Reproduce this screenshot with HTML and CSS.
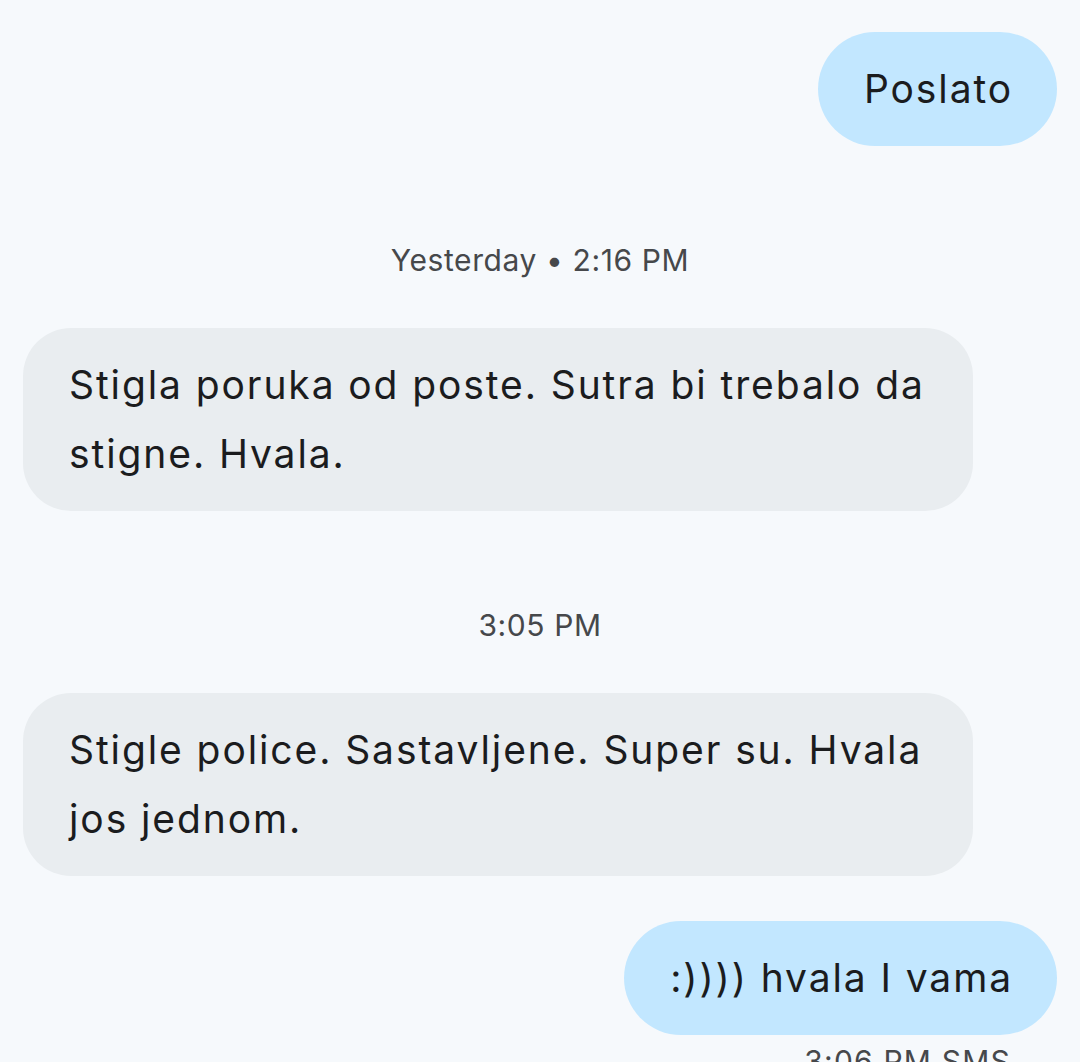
FILE: index.html
```html
<!DOCTYPE html>
<html lang="sr">
<head>
<meta charset="utf-8">
<link rel="stylesheet" href="styles.css">
</head>
<body>
<main class="thread">
  <div class="row out">
    <div class="bubble sent">Poslato</div>
  </div>
  <div class="stamp">Yesterday • 2:16 PM</div>
  <div class="row in">
    <div class="bubble recv">Stigla poruka od poste. Sutra bi trebalo da stigne. Hvala.</div>
  </div>
  <div class="stamp">3:05 PM</div>
  <div class="row in">
    <div class="bubble recv">Stigle police. Sastavljene. Super su. Hvala jos jednom.</div>
  </div>
  <div class="row out gap-small">
    <div class="bubble sent">:)))) hvala I vama</div>
  </div>
  <div class="status">3:06 PM SMS</div>
</main>
</body>
</html>
```

FILE: styles.css
```css
html, body {
  margin: 0;
  padding: 0;
  background: #f6f9fc;
  height: 100%;
  overflow: hidden;
}

.thread {
  display: flex;
  flex-direction: column;
  padding: 32px 23px 0 23px;
  font-family: Inter, Roboto, "Noto Sans", sans-serif;
  color: #1b1c1e;
}

.row {
  display: flex;
}

.row.out {
  justify-content: flex-end;
}

.row.in {
  justify-content: flex-start;
}

.gap-small {
  margin-top: 45px;
}

.bubble {
  box-sizing: border-box;
  font-size: 39px;
  letter-spacing: 1.9px;
  line-height: 69px;
  padding: 22px 44px 23px 46px;
  max-width: 950px;
}

.sent {
  background: #c2e7ff;
  border-radius: 57px;
}

.recv {
  background: #e9edf0;
  border-radius: 48px;
}

.stamp {
  text-align: center;
  font-size: 30px;
  letter-spacing: 0.6px;
  line-height: 40px;
  color: #46484b;
  margin: 94px 0 48px;
}

.status {
  text-align: right;
  font-size: 30px;
  letter-spacing: 1.2px;
  line-height: 40px;
  color: #46484b;
  margin-top: 6px;
  padding-right: 46px;
}
```
